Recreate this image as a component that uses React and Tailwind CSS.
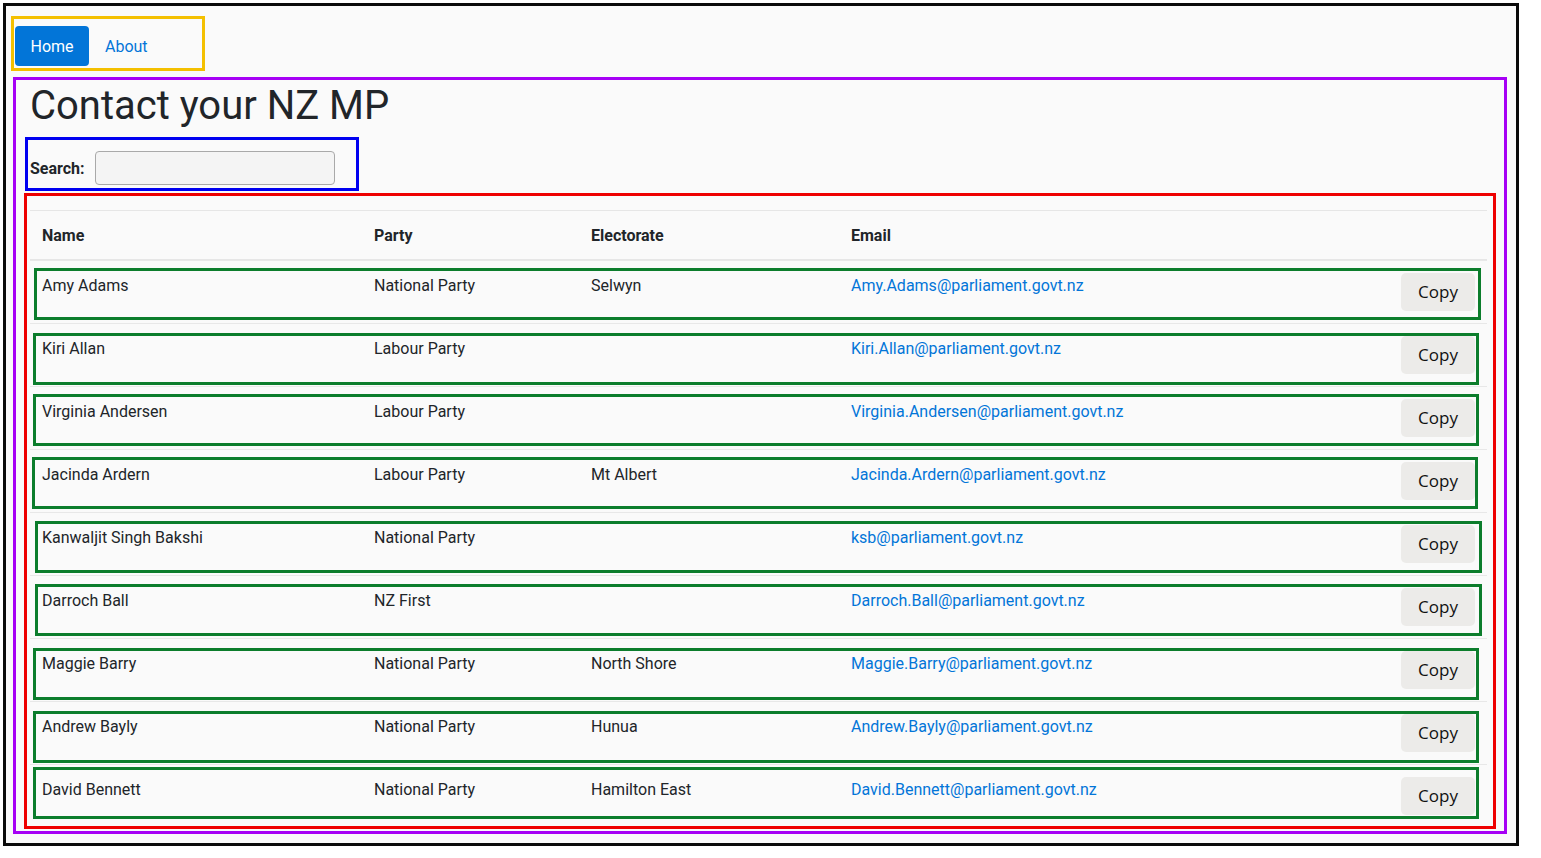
import React from 'react';

// MP list shown in the table (box = placement of the green outline for that row)
const mps = [
  { name: 'Amy Adams', party: 'National Party', electorate: 'Selwyn', email: 'Amy.Adams@parliament.govt.nz', box: 'top-[7px] left-[4px] right-[6px]' },
  { name: 'Kiri Allan', party: 'Labour Party', electorate: '', email: 'Kiri.Allan@parliament.govt.nz', box: 'top-[9px] left-[3px] right-[8px]' },
  { name: 'Virginia Andersen', party: 'Labour Party', electorate: '', email: 'Virginia.Andersen@parliament.govt.nz', box: 'top-[7px] left-[3px] right-[8px]' },
  { name: 'Jacinda Ardern', party: 'Labour Party', electorate: 'Mt Albert', email: 'Jacinda.Ardern@parliament.govt.nz', box: 'top-[7px] left-[2px] right-[9px]' },
  { name: 'Kanwaljit Singh Bakshi', party: 'National Party', electorate: '', email: 'ksb@parliament.govt.nz', box: 'top-[8px] left-[5px] right-[5px]' },
  { name: 'Darroch Ball', party: 'NZ First', electorate: '', email: 'Darroch.Ball@parliament.govt.nz', box: 'top-[8px] left-[5px] right-[5px]' },
  { name: 'Maggie Barry', party: 'National Party', electorate: 'North Shore', email: 'Maggie.Barry@parliament.govt.nz', box: 'top-[9px] left-[3px] right-[8px]' },
  { name: 'Andrew Bayly', party: 'National Party', electorate: 'Hunua', email: 'Andrew.Bayly@parliament.govt.nz', box: 'top-[9px] left-[3px] right-[8px]' },
  { name: 'David Bennett', party: 'National Party', electorate: 'Hamilton East', email: 'David.Bennett@parliament.govt.nz', box: 'top-[2px] left-[3px] right-[8px]' },
];

const cols = 'grid grid-cols-[332px_217px_260px_1fr_98px]';

function MpRow({ mp }) {
  return (
    <div className={`relative ${cols} border-t border-[#e8e8e8]`}>
      <div className="px-3 pt-[13px] pb-[11px] leading-6">{mp.name}</div>
      <div className="px-3 pt-[13px] pb-[11px] leading-6">{mp.party}</div>
      <div className="px-3 pt-[13px] pb-[11px] leading-6">{mp.electorate}</div>
      <div className="px-3 pt-[13px] pb-[11px] leading-6">
        <a href="#" className="text-[#0275d8]">{mp.email}</a>
      </div>
      <div className="px-3 py-3 flex justify-end">
        <button className="h-[38px] w-[74px] rounded-[5px] bg-[#ecebe9] font-['Open_Sans',sans-serif] text-[17px] text-[#111]">
          Copy
        </button>
      </div>
      {/* green outline */}
      <div className={`pointer-events-none absolute h-[52px] border-[3px] border-[#0c7d2c] ${mp.box}`} />
    </div>
  );
}

function App() {
  return (
    <div className="h-[858px] bg-white pt-[3px] pl-[3px] font-['Roboto',sans-serif] text-base text-[#212529]">
      <div className="w-[1516px] h-[843px] border-[3px] border-[#0a0a0a] bg-[#fafafa]">
        {/* nav */}
        <nav className="ml-[5px] mt-[10px] w-[194px] h-[55px] border-[3px] border-[#f4c000] flex items-start pl-[1px] pt-[7px]">
          <a href="#" className="h-10 w-[74px] flex items-center justify-center pt-[2px] rounded bg-[#0275d8] text-white">Home</a>
          <a href="#" className="h-10 px-4 flex items-center pt-[2px] text-[#0275d8]">About</a>
        </nav>

        <main className="ml-[7px] mt-[6px] w-[1494px] h-[757px] border-[3px] border-[#a600f5]">
          <h1 className="ml-[14px] h-[48px] pt-[2px] text-[40px] leading-[48px] font-normal">Contact your NZ MP</h1>

          {/* search */}
          <div className="ml-[9px] mt-[9px] w-[334px] h-[54px] border-[3px] border-[#0000f0] flex items-center pl-[2px] pt-[8px]">
            <label className="pt-[2px] font-bold leading-6">Search:</label>
            <input type="text" className="ml-[10px] w-[240px] h-[34px] border border-[#a9a9a9] rounded bg-[#f4f4f4]" />
          </div>

          {/* table */}
          <div className="ml-[8px] mt-[2px] w-[1472px] h-[636px] border-[3px] border-[#ee0000] pl-[3px] pt-[14px]">
            <div className="w-[1457px]">
              <div className={`${cols} border-t border-b border-[#e6e6e6] font-bold`}>
                <div className="px-3 pt-[13px] pb-[11px] leading-6">Name</div>
                <div className="px-3 pt-[13px] pb-[11px] leading-6">Party</div>
                <div className="px-3 pt-[13px] pb-[11px] leading-6">Electorate</div>
                <div className="px-3 pt-[13px] pb-[11px] leading-6">Email</div>
                <div className="px-3 pt-[13px] pb-[11px] leading-6"></div>
              </div>
              {mps.map((mp) => (
                <MpRow key={mp.email} mp={mp} />
              ))}
            </div>
          </div>
        </main>
      </div>
    </div>
  );
}

export default App;
